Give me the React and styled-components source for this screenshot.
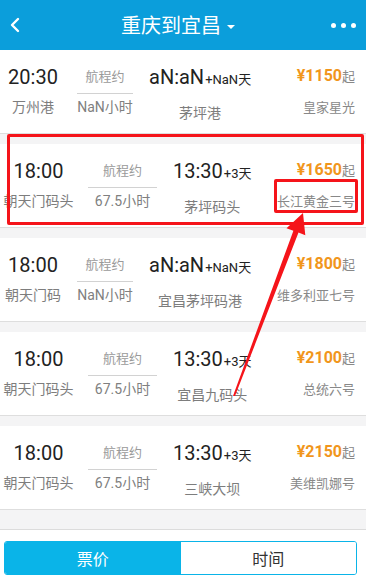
import React from 'react';
import styled, { createGlobalStyle } from 'styled-components';

const trips = [
  { dep: '20:30', from: '万州港', dur: 'NaN小时', arr: 'aN:aN', plus: '+NaN天', to: '茅坪港', price: '1150', ship: '皇家星光', depW: 56, midW: 56 },
  { dep: '18:00', from: '朝天门码头', dur: '67.5小时', arr: '13:30', plus: '+3天', to: '茅坪码头', price: '1650', ship: '长江黄金三号', depW: 67, midW: 69 },
  { dep: '18:00', from: '朝天门码', dur: 'NaN小时', arr: 'aN:aN', plus: '+NaN天', to: '宜昌茅坪码港', price: '1800', ship: '维多利亚七号', depW: 56, midW: 56 },
  { dep: '18:00', from: '朝天门码头', dur: '67.5小时', arr: '13:30', plus: '+3天', to: '宜昌九码头', price: '2100', ship: '总统六号', depW: 67, midW: 69 },
  { dep: '18:00', from: '朝天门码头', dur: '67.5小时', arr: '13:30', plus: '+3天', to: '三峡大坝', price: '2150', ship: '美维凯娜号', depW: 67, midW: 69 },
];

function App() {
  return (
    <>
      <GlobalStyle />
      <Page>
        <Header>
          <BackBtn>
            <svg width="12" height="16" viewBox="0 0 12 16">
              <path d="M9 2 L3 8 L9 14" fill="none" stroke="#fff" strokeWidth="2.4" strokeLinecap="round" strokeLinejoin="round" />
            </svg>
          </BackBtn>
          <Title>
            重庆到宜昌
            <Caret />
          </Title>
          <Dots>
            <i />
            <i />
            <i />
          </Dots>
        </Header>

        <List>
          {trips.map((t, i) => (
            <Card key={i}>
              <Dep style={{ width: t.depW }}>
                <Time>{t.dep}</Time>
                <Station>{t.from}</Station>
              </Dep>
              <Mid style={{ width: t.midW }}>
                <Label>航程约</Label>
                <Duration>{t.dur}</Duration>
              </Mid>
              <Arr>
                <Time>
                  {t.arr}
                  <Plus>{t.plus}</Plus>
                </Time>
                <Station $low>{t.to}</Station>
              </Arr>
              <PriceCol>
                <Price>
                  ¥{t.price}
                  <Qi>起</Qi>
                </Price>
                <Ship>{t.ship}</Ship>
              </PriceCol>
            </Card>
          ))}
        </List>

        <BottomBar>
          <Tabs>
            <Tab $active>票价</Tab>
            <Tab>时间</Tab>
          </Tabs>
        </BottomBar>

        <HighlightBox />
        <ShipBox />
        <Arrow width="366" height="580" viewBox="0 0 366 580">
          <polygon
            points="233,396 235,396 298.5,232.5 305.3,235.2 303,213 286.5,228.2 293.4,230.7"
            fill="#f5141a"
          />
        </Arrow>
      </Page>
    </>
  );
}

export default App;

const GlobalStyle = createGlobalStyle`
  html, body {
    margin: 0;
    padding: 0;
    background: #f4f4f4;
    overflow: hidden;
  }
  * {
    box-sizing: border-box;
  }
`;

const Page = styled.div`
  position: relative;
  width: 366px;
  height: 580px;
  display: flex;
  flex-direction: column;
  background: #f4f4f5;
  font-family: Roboto, 'Noto Sans CJK SC', sans-serif;
  overflow: hidden;
`;

const Header = styled.div`
  height: 50px;
  flex-shrink: 0;
  display: grid;
  grid-template-columns: 44px 1fr 44px;
  align-items: center;
  background: #0b9edb;
  color: #fff;
`;

const BackBtn = styled.div`
  display: flex;
  align-items: center;
  padding-left: 9px;
`;

const Title = styled.div`
  display: flex;
  align-items: center;
  justify-content: center;
  padding-right: 10px;
  font-family: 'Noto Sans CJK SC', sans-serif;
  font-size: 20px;
  line-height: 26px;
`;

const Caret = styled.span`
  width: 0;
  height: 0;
  margin-left: 6px;
  margin-top: 3px;
  border-left: 4px solid transparent;
  border-right: 4px solid transparent;
  border-top: 4px solid #fff;
`;

const Dots = styled.div`
  display: flex;
  gap: 5px;
  justify-content: flex-end;
  padding-right: 10px;

  i {
    width: 5px;
    height: 5px;
    border-radius: 50%;
    background: #fff;
  }
`;

const List = styled.div`
  flex: 1;
  overflow: hidden;
`;

const Card = styled.div`
  height: 84px;
  margin-bottom: 10px;
  display: flex;
  align-items: flex-start;
  gap: 16px;
  padding: 0 11px 0 5px;
  background: #fff;
  border-bottom: 1px solid #dedede;
`;

const Dep = styled.div`
  display: flex;
  flex-direction: column;
  align-items: center;
  white-space: nowrap;
`;

const Time = styled.div`
  margin-top: 15px;
  font-size: 20px;
  line-height: 24px;
  color: #222;
  white-space: nowrap;
`;

const Plus = styled.span`
  font-size: 13px;
  margin-left: 1px;
`;

const Station = styled.div`
  margin-top: ${p => (p.$low ? '11px' : '8px')};
  font-size: 14px;
  line-height: 20px;
  color: #7d7d7d;
  white-space: nowrap;
`;

const Mid = styled.div`
  display: flex;
  flex-direction: column;
  align-items: center;
`;

const Label = styled.div`
  width: 100%;
  margin-top: 17px;
  padding-bottom: 6px;
  border-bottom: 1px solid #d2d2d2;
  text-align: center;
  font-size: 13px;
  line-height: 20px;
  color: #9a9a9a;
`;

const Duration = styled.div`
  margin-top: 3px;
  font-size: 14px;
  line-height: 20px;
  color: #808080;
  white-space: nowrap;
`;

const Arr = styled.div`
  display: flex;
  flex-direction: column;
  align-items: center;
`;

const PriceCol = styled.div`
  margin-left: auto;
  display: flex;
  flex-direction: column;
  align-items: flex-end;
`;

const Price = styled.div`
  margin-top: 14px;
  font-size: 16px;
  font-weight: 700;
  line-height: 24px;
  color: #f1961b;
  white-space: nowrap;
`;

const Qi = styled.span`
  font-size: 13px;
  font-weight: 400;
  color: #888;
`;

const Ship = styled.div`
  margin-top: 9px;
  font-size: 13px;
  line-height: 20px;
  color: #888;
  white-space: nowrap;
`;

const BottomBar = styled.div`
  height: 51px;
  flex-shrink: 0;
  padding: 11px 9px 0 4px;
  background: #fff;
  border-top: 1px solid #dcdcdc;
`;

const Tabs = styled.div`
  display: flex;
  height: 34px;
  border: 1px solid #0ab4e8;
  border-radius: 3px;
  overflow: hidden;
`;

const Tab = styled.div`
  flex: 1;
  display: flex;
  align-items: center;
  justify-content: center;
  font-family: 'Noto Sans CJK SC', sans-serif;
  font-size: 16px;
  background: ${p => (p.$active ? '#0ab4e8' : '#fff')};
  color: ${p => (p.$active ? '#fff' : '#333')};
`;

const HighlightBox = styled.div`
  position: absolute;
  left: 7px;
  top: 134px;
  width: 357px;
  height: 91px;
  border: 3px solid #f5141a;
  border-radius: 2px;
  pointer-events: none;
`;

const ShipBox = styled.div`
  position: absolute;
  left: 274px;
  top: 179px;
  width: 84px;
  height: 34px;
  border: 3px solid #f5141a;
  border-radius: 2px;
  pointer-events: none;
`;

const Arrow = styled.svg`
  position: absolute;
  left: 0;
  top: 0;
  pointer-events: none;
`;
